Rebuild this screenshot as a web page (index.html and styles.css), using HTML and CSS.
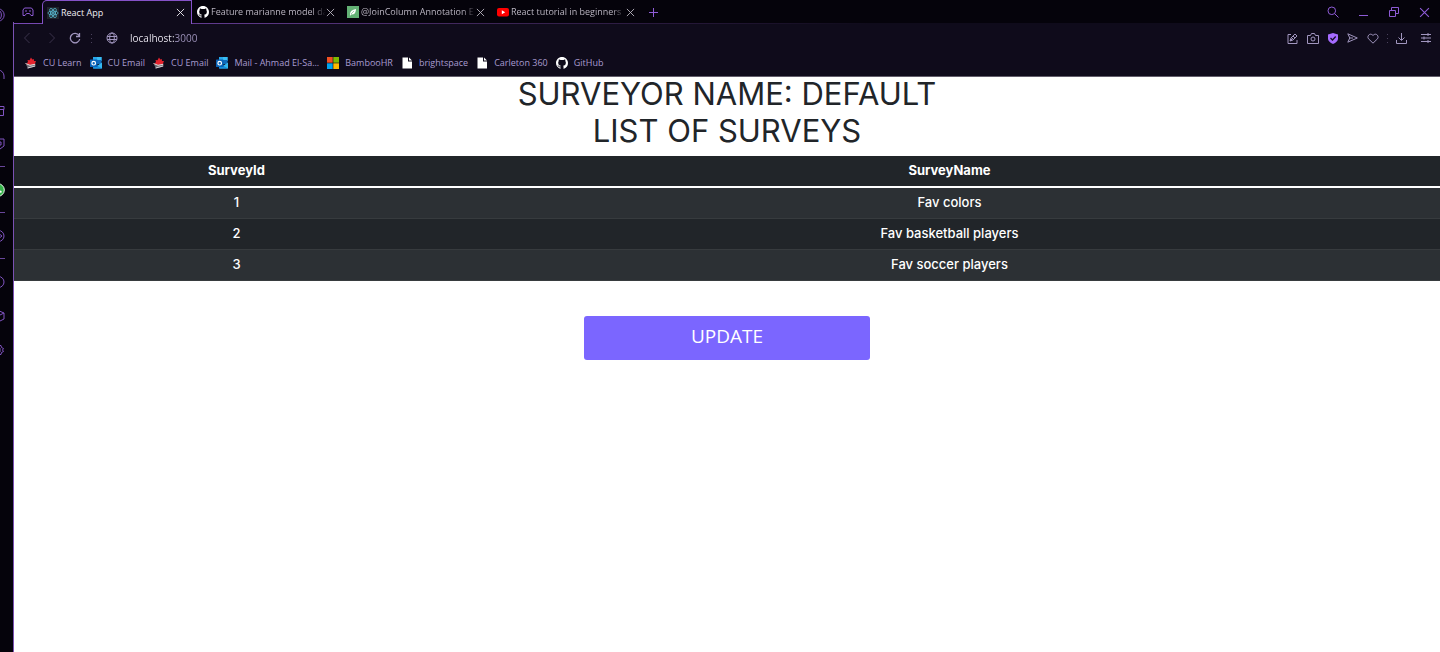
FILE: index.html
```html
<!DOCTYPE html>
<html lang="en">
<head>
<meta charset="utf-8">
<meta name="viewport" content="width=device-width, initial-scale=1">
<title>React App</title>
<link rel="stylesheet" href="styles.css">
</head>
<body>
<svg class="defs" aria-hidden="true">
  <symbol id="i-close" viewBox="0 0 10 10"><path d="M1 1l8 8M9 1L1 9"/></symbol>
  <symbol id="i-github" viewBox="0 0 16 16"><path d="M8 0C3.58 0 0 3.58 0 8c0 3.54 2.29 6.53 5.47 7.59.4.07.55-.17.55-.38v-1.49c-2.01.37-2.53-.49-2.69-.94-.09-.23-.48-.94-.82-1.13-.28-.15-.68-.52-.01-.53.63-.01 1.08.58 1.23.82.72 1.21 1.87.87 2.33.66.07-.52.28-.87.51-1.07-1.78-.2-3.64-.89-3.64-3.95 0-.87.31-1.59.82-2.15-.08-.2-.36-1.02.08-2.12 0 0 .67-.21 2.2.82a7.5 7.5 0 0 1 4 0c1.53-1.04 2.2-.82 2.2-.82.44 1.1.16 1.92.08 2.12.51.56.82 1.27.82 2.15 0 3.07-1.87 3.75-3.65 3.95.29.25.54.73.54 1.48v2.2c0 .21.15.46.55.38A8 8 0 0 0 16 8c0-4.42-3.58-8-8-8z" fill="#fff" stroke="none"/></symbol>
  <symbol id="i-outlook" viewBox="0 0 12 12"><path d="M3 0h8.500v4H3z" fill="#28a8ea"/><path d="M7 0h4.500v4H7z" fill="#39bdf5"/><path d="M3 3h8.500v4H3z" fill="#0f6cbd"/><path d="M3 11.500l9-6v6z" fill="#35b8f1"/><path d="M3 6l9 5.500H3z" fill="#1490df"/><rect y="2.500" width="7.500" height="7.500" rx=".6" fill="#0a63b8"/><circle cx="3.700" cy="6.200" r="1.800" fill="none" stroke="#fff" stroke-width="1.200"/></symbol>
  <symbol id="i-maple" viewBox="0 0 12 12"><path d="M1 7.500l9.500-1v3l-7.500 2z" fill="#6b6870"/><path d="M2.500 11l7.500-2" stroke="#d6d3d8" stroke-width="1"/><path d="M6 .500L7.300 2.500l1.500-.5.2 2 2 0L9.800 7 5 8 1.500 6.500 3 5 2.500 3l2 .3z" fill="#e4232e"/><path d="M.500 6.500l4.500 1.800 5-1" fill="none" stroke="#e9dcdc"/></symbol>
  <symbol id="i-file" viewBox="0 0 12 12"><path d="M1.500.500h5.500v4h4v7h-9.500z" fill="#fff"/><path d="M8 .500l3 3H8z" fill="#fff"/></symbol>
</svg>
<div class="browser">
  <aside class="sidebar" aria-label="Browser sidebar">
    <svg class="side-icon logo" viewBox="0 0 14 14"><circle cx="7" cy="7" r="6.200"/><ellipse cx="7" cy="7" rx="3.400" ry="5"/></svg>
    <svg class="side-icon app" viewBox="0 0 14 14"><path d="M1 13V8a6 6 0 0 1 12 0v3"/></svg>
    <svg class="side-icon bag" viewBox="0 0 14 14"><path d="M1 2.500h12v3H1zM2 5.500h10.500v6H2z"/></svg>
    <svg class="side-icon" viewBox="0 0 14 14"><path d="M2 2h11v7l-4 3H2z"/><path d="M5 5h5v3H5"/></svg>
    <span class="side-line"></span>
    <svg class="side-icon" viewBox="0 0 14 14"><circle cx="7" cy="7" r="6.300" fill="#35b34a" stroke="#e9f5ea"/><path d="M6 4q0 4 4.500 5" stroke="#fff" stroke-width="2"/></svg>
    <span class="side-line"></span>
    <svg class="side-icon" viewBox="0 0 14 14"><circle cx="7.500" cy="7" r="5.500"/><path d="M7 4l4 3-4 3z"/></svg>
    <span class="side-line"></span>
    <svg class="side-icon" viewBox="0 0 14 14"><circle cx="7.500" cy="7" r="5.500"/></svg>
    <svg class="side-icon cube" viewBox="0 0 14 14"><path d="M1 4l6-2.500L13 4v6l-5 2.500L1 10zM8 6.500L13 4M8 6.500v6M8 6.500L1 4"/></svg>
    <svg class="side-icon cube" viewBox="0 0 14 14"><path d="M3 2.500h7l.5 2 2 1-1 1.500 1 1.500-2 1-.5 2H3"/><path d="M7 5h2v4H7"/></svg>
  </aside>
  <div class="window">
    <header class="chrome">
      <div class="tabs">
        <button class="icon-btn pad" aria-label="Workspace"><svg width="12" height="10" viewBox="0 0 12 10"><path d="M2.500 1h7l1.500 2v5.500H9L7.500 6.500h-3L3 8.500H1V3zM3 4h2M7 4h2"/></svg></button>
        <div class="tab active">
          <button class="tab-main"><svg class="fav" viewBox="0 0 12 12"><rect width="12" height="12" fill="#20232a"/><g fill="none" stroke="#57b7ce" stroke-width=".8"><ellipse cx="6" cy="6" rx="5.200" ry="2"/><ellipse cx="6" cy="6" rx="5.200" ry="2" transform="rotate(60 6 6)"/><ellipse cx="6" cy="6" rx="5.200" ry="2" transform="rotate(120 6 6)"/></g><circle cx="6" cy="6" r="1" fill="#57b7ce"/></svg><span class="tab-text">React App</span></button>
          <button class="icon-btn" aria-label="Close tab"><svg width="9" height="9"><use href="#i-close"/></svg></button>
        </div>
        <div class="tab">
          <button class="tab-main"><svg class="fav"><use href="#i-github"/></svg><span class="tab-text fade">Feature marianne model da</span></button>
          <button class="icon-btn" aria-label="Close tab"><svg width="9" height="9"><use href="#i-close"/></svg></button>
        </div>
        <div class="tab">
          <button class="tab-main"><svg class="fav" viewBox="0 0 12 12"><rect width="12" height="12" fill="#63b175"/><path d="M3 8q0-4 6-5 0 6-5 5.500L3 10z" fill="#fff"/><path d="M4 8l3-3" stroke="#63b175" stroke-width=".6"/></svg><span class="tab-text fade">@JoinColumn Annotation E</span></button>
          <button class="icon-btn" aria-label="Close tab"><svg width="9" height="9"><use href="#i-close"/></svg></button>
        </div>
        <div class="tab">
          <button class="tab-main"><svg class="fav" viewBox="0 0 12 12"><rect y="2" width="12" height="8.500" rx="2" fill="#f00"/><path d="M4.800 4.300v4L8.200 6.300z" fill="#fff"/></svg><span class="tab-text fade">React tutorial in beginners</span></button>
          <button class="icon-btn" aria-label="Close tab"><svg width="9" height="9"><use href="#i-close"/></svg></button>
        </div>
        <button class="icon-btn plus" aria-label="New tab"><svg width="9" height="9" viewBox="0 0 9 9"><path d="M4.500 0v9M0 4.500h9"/></svg></button>
        <div class="controls">
          <button class="icon-btn" aria-label="Search tabs"><svg width="12" height="12" viewBox="0 0 12 12"><circle cx="4.800" cy="4.800" r="3.800"/><path d="M7.600 7.600L11.500 11.500"/></svg></button>
          <button class="icon-btn" aria-label="Minimize"><svg width="10" height="10" viewBox="0 0 10 10"><path d="M0 8.500h9"/></svg></button>
          <button class="icon-btn" aria-label="Restore"><svg width="10" height="10" viewBox="0 0 10 10"><path d="M.5 3.500h6v6h-6zM2.500 3.500v-3h7v6h-3"/></svg></button>
          <button class="icon-btn" aria-label="Close window"><svg width="11" height="11"><use href="#i-close"/></svg></button>
        </div>
      </div>
      <div class="toolbar">
        <button class="icon-btn dim" aria-label="Back"><svg width="8" height="12" viewBox="0 0 8 12"><path d="M6.500 1L1.500 6l5 5"/></svg></button>
        <button class="icon-btn dim" aria-label="Forward"><svg width="8" height="12" viewBox="0 0 8 12"><path d="M1.500 1l5 5-5 5"/></svg></button>
        <button class="icon-btn" aria-label="Reload"><svg width="12" height="12" viewBox="0 0 12 12"><path d="M10 3.500A4.700 4.700 0 1 0 10.700 7M10.500 1v3.500H7" stroke-width="1.300"/></svg></button>
        <span class="dots"></span>
        <svg class="globe" width="12" height="12" viewBox="0 0 12 12"><circle cx="6" cy="6" r="5"/><ellipse cx="6" cy="6" rx="2.300" ry="5"/><path d="M1 4.500h10M1 7.500h10"/></svg>
        <input class="address" type="text" value="localhost:3000" aria-label="Address">
        <div class="actions">
          <button class="icon-btn" aria-label="Edit page"><svg width="11" height="11" viewBox="0 0 11 11"><path d="M4 1.500H1v9h9V7M3 8l1-3 4-4 2 2-4 4zM6 3l2 2M3 8l3-3"/></svg></button>
          <button class="icon-btn" aria-label="Snapshot"><svg width="12" height="11" viewBox="0 0 12 11"><path d="M.5 2.500h3l1-2h3l1 2h3v8H.5z"/><circle cx="6" cy="6" r="2"/></svg></button>
          <button class="icon-btn" aria-label="Blocker"><svg width="10" height="11" viewBox="0 0 10 11"><path d="M5 0l5 1.500V6Q9.500 9 5 11 .5 9 0 6V1.500z" fill="#a56bff" stroke="none"/><path d="M2.500 5l2 2 3.200-3.500" stroke="#171027" stroke-width="1.300"/></svg></button>
          <button class="icon-btn" aria-label="Send to flow"><svg width="11" height="10" viewBox="0 0 11 10"><path d="M.8.8L10.300 5 .8 9.200 2.800 5zM2.800 5H6"/></svg></button>
          <button class="icon-btn" aria-label="Favorite"><svg width="12" height="11" viewBox="0 0 12 11"><path d="M6 10.200L1.500 5.800C-.5 3.300 3 -1 6 2.500 9-1 12.500 3.300 10.500 5.800z"/></svg></button>
          <span class="dots"></span>
          <button class="icon-btn" aria-label="Downloads"><svg width="11" height="11" viewBox="0 0 11 11"><path d="M5.500 0v7M2.500 4.500l3 3 3-3M.5 7v3.500h10V7"/></svg></button>
          <button class="icon-btn settings" aria-label="Easy setup"><svg width="10" height="10" viewBox="0 0 10 10"><path d="M0 1.500h10M0 5h10M0 8.500h10M7 0v3M3 3.500v3M7 7v3"/></svg></button>
        </div>
      </div>
      <nav class="bookmarks" aria-label="Bookmarks">
        <a href="#"><svg class="fav"><use href="#i-maple"/></svg>CU Learn</a>
        <a href="#"><svg class="fav"><use href="#i-outlook"/></svg>CU Email</a>
        <a href="#"><svg class="fav"><use href="#i-maple"/></svg>CU Email</a>
        <a href="#"><svg class="fav"><use href="#i-outlook"/></svg>Mail - Ahmad El-Sa...</a>
        <a href="#"><svg class="fav" viewBox="0 0 12 12"><path d="M0 0h5.700v5.700H0z" fill="#f25022"/><path d="M6.300 0H12v5.700H6.300z" fill="#7fba00"/><path d="M0 6.300h5.700V12H0z" fill="#00a4ef"/><path d="M6.300 6.300H12V12H6.300z" fill="#ffb900"/></svg>BambooHR</a>
        <a href="#"><svg class="fav"><use href="#i-file"/></svg>brightspace</a>
        <a href="#"><svg class="fav"><use href="#i-file"/></svg>Carleton 360</a>
        <a href="#"><svg class="fav"><use href="#i-github"/></svg>GitHub</a>
      </nav>
    </header>
    <main class="page">
      <h1>SURVEYOR NAME: DEFAULT</h1>
      <h2>LIST OF SURVEYS</h2>
      <table>
        <thead><tr><th class="id-col" scope="col">SurveyId</th><th scope="col">SurveyName</th></tr></thead>
        <tbody>
          <tr><td>1</td><td>Fav colors</td></tr>
          <tr><td>2</td><td>Fav basketball players</td></tr>
          <tr><td>3</td><td>Fav soccer players</td></tr>
        </tbody>
      </table>
      <button class="update">UPDATE</button>
    </main>
  </div>
</div>
</body>
</html>
```
FILE: styles.css
```css
* { box-sizing: border-box; }
body { margin: 0; background: #fff; font-family: "Open Sans", sans-serif; }
button { border: 0; padding: 0; background: none; color: inherit; font: inherit; }
svg { fill: none; stroke: currentColor; stroke-width: 1; flex: none; display: block; }
.defs { display: none; }
.fav { width: 12px; height: 12px; stroke: none; }
.browser { display: flex; min-height: 100vh; }

.sidebar {
  flex: 0 0 14px;
  display: flex;
  flex-direction: column;
  align-items: flex-end;
  gap: 15px;
  padding: 8px 8px 0 0;
  overflow: hidden;
  background: #05030b;
  border-right: 1px solid;
  border-image: linear-gradient(#05030b 23px, #7a51b3 23px) 1;
  color: #8154c2;
}
.side-icon { width: 14px; height: 14px; }
.side-icon.logo { margin-bottom: 31px; }
.side-icon.app { margin-bottom: 7px; }
.side-icon.bag { margin-bottom: 4px; }
.side-icon.cube { margin-top: 5px; }
.side-line { width: 10px; height: 2px; border-top: 1px solid #68469b; }

.window { flex: 1; min-width: 0; }
.chrome { background: #0f0b1b; border-bottom: 1px solid #625d6b; color: #a196bf; }
.tabs {
  display: flex;
  align-items: center;
  height: 24px;
  background: linear-gradient(90deg, #7849b5, #43295f 30%, #0f0b1b 60%) bottom / 100% 1px no-repeat #05030b;
  color: #8e5bd6;
}
.icon-btn { display: grid; place-items: center; flex: none; }
.pad { width: 28px; }
.tab {
  display: flex;
  align-items: center;
  flex: 0 1 150px;
  min-width: 0;
  height: 24px;
  padding: 0 7px 0 5px;
  color: #b9b4c0;
}
.tab.active {
  background: #0f0b1b;
  border: 1px solid #8552c8;
  border-bottom: 0;
  border-radius: 5px 0 0 0;
  padding: 0 6px 0 4px;
  color: #f0edf5;
}
.tab-main { display: flex; align-items: center; gap: 2px; flex: 1; min-width: 0; }
.tab-text { flex: 1; overflow: hidden; white-space: nowrap; text-align: left; font-size: 9px; line-height: 14px; }
.fade { mask-image: linear-gradient(90deg, #000 88%, transparent); }
.plus { width: 22px; }
.controls { display: flex; gap: 20px; margin-left: auto; padding-right: 10px; }

.toolbar { display: flex; align-items: center; height: 28px; padding: 0 9px; }
.toolbar > .icon-btn { width: 24px; margin-left: -1px; }
.toolbar > .icon-btn:first-child { width: 8px; margin-right: 10px; margin-left: 0; }
.dim { color: #3b334c; }
.dots { width: 1px; height: 9px; margin: 0 4px; background: repeating-linear-gradient(#4b425d 0 1px, transparent 1px 4px); }
.globe { margin-left: 10px; }
.address {
  flex: 1;
  min-width: 0;
  margin-left: 12px;
  padding: 0;
  border: 0;
  outline: 0;
  font: 10px/16px "Open Sans", sans-serif;
  color: transparent;
  background: linear-gradient(90deg, #f4f1fa 44px, #a196bf 44px);
  background-clip: text;
}
.actions { display: flex; align-items: center; gap: 9px; }
.actions .dots { margin: 0 -1px; }
.settings { margin-left: 5px; }

.bookmarks { display: flex; gap: 8px; height: 24px; padding: 0 11px 2px; }
.bookmarks a { display: flex; align-items: center; gap: 6px; color: #a99cd1; text-decoration: none; white-space: nowrap; font-size: 9px; line-height: 14px; }

.page { text-align: center; color: #212529; font-family: Inter, sans-serif; }
h1, h2 { margin: 0 0 3px; font-size: 31px; line-height: 34px; font-weight: 400; }
h2 { margin-bottom: 8px; }
table { width: 100%; border-collapse: collapse; background: #212529; color: #fff; font-size: 13px; line-height: 20px; font-weight: 500; }
th, td { padding: 4px 5px 6px; border-bottom: 1px solid #373b3e; }
th { font-weight: 700; border-bottom: 2px solid #fff; }
.id-col { width: 31.2%; }
tbody tr:nth-child(odd) { background: #2c3034; }
.update {
  width: 20%;
  margin-top: 35px;
  padding: 7px 12px 11px;
  border-radius: 3px;
  background: #7b66ff;
  color: #fff;
  font: 19px/26px "Open Sans", sans-serif;
}
```
